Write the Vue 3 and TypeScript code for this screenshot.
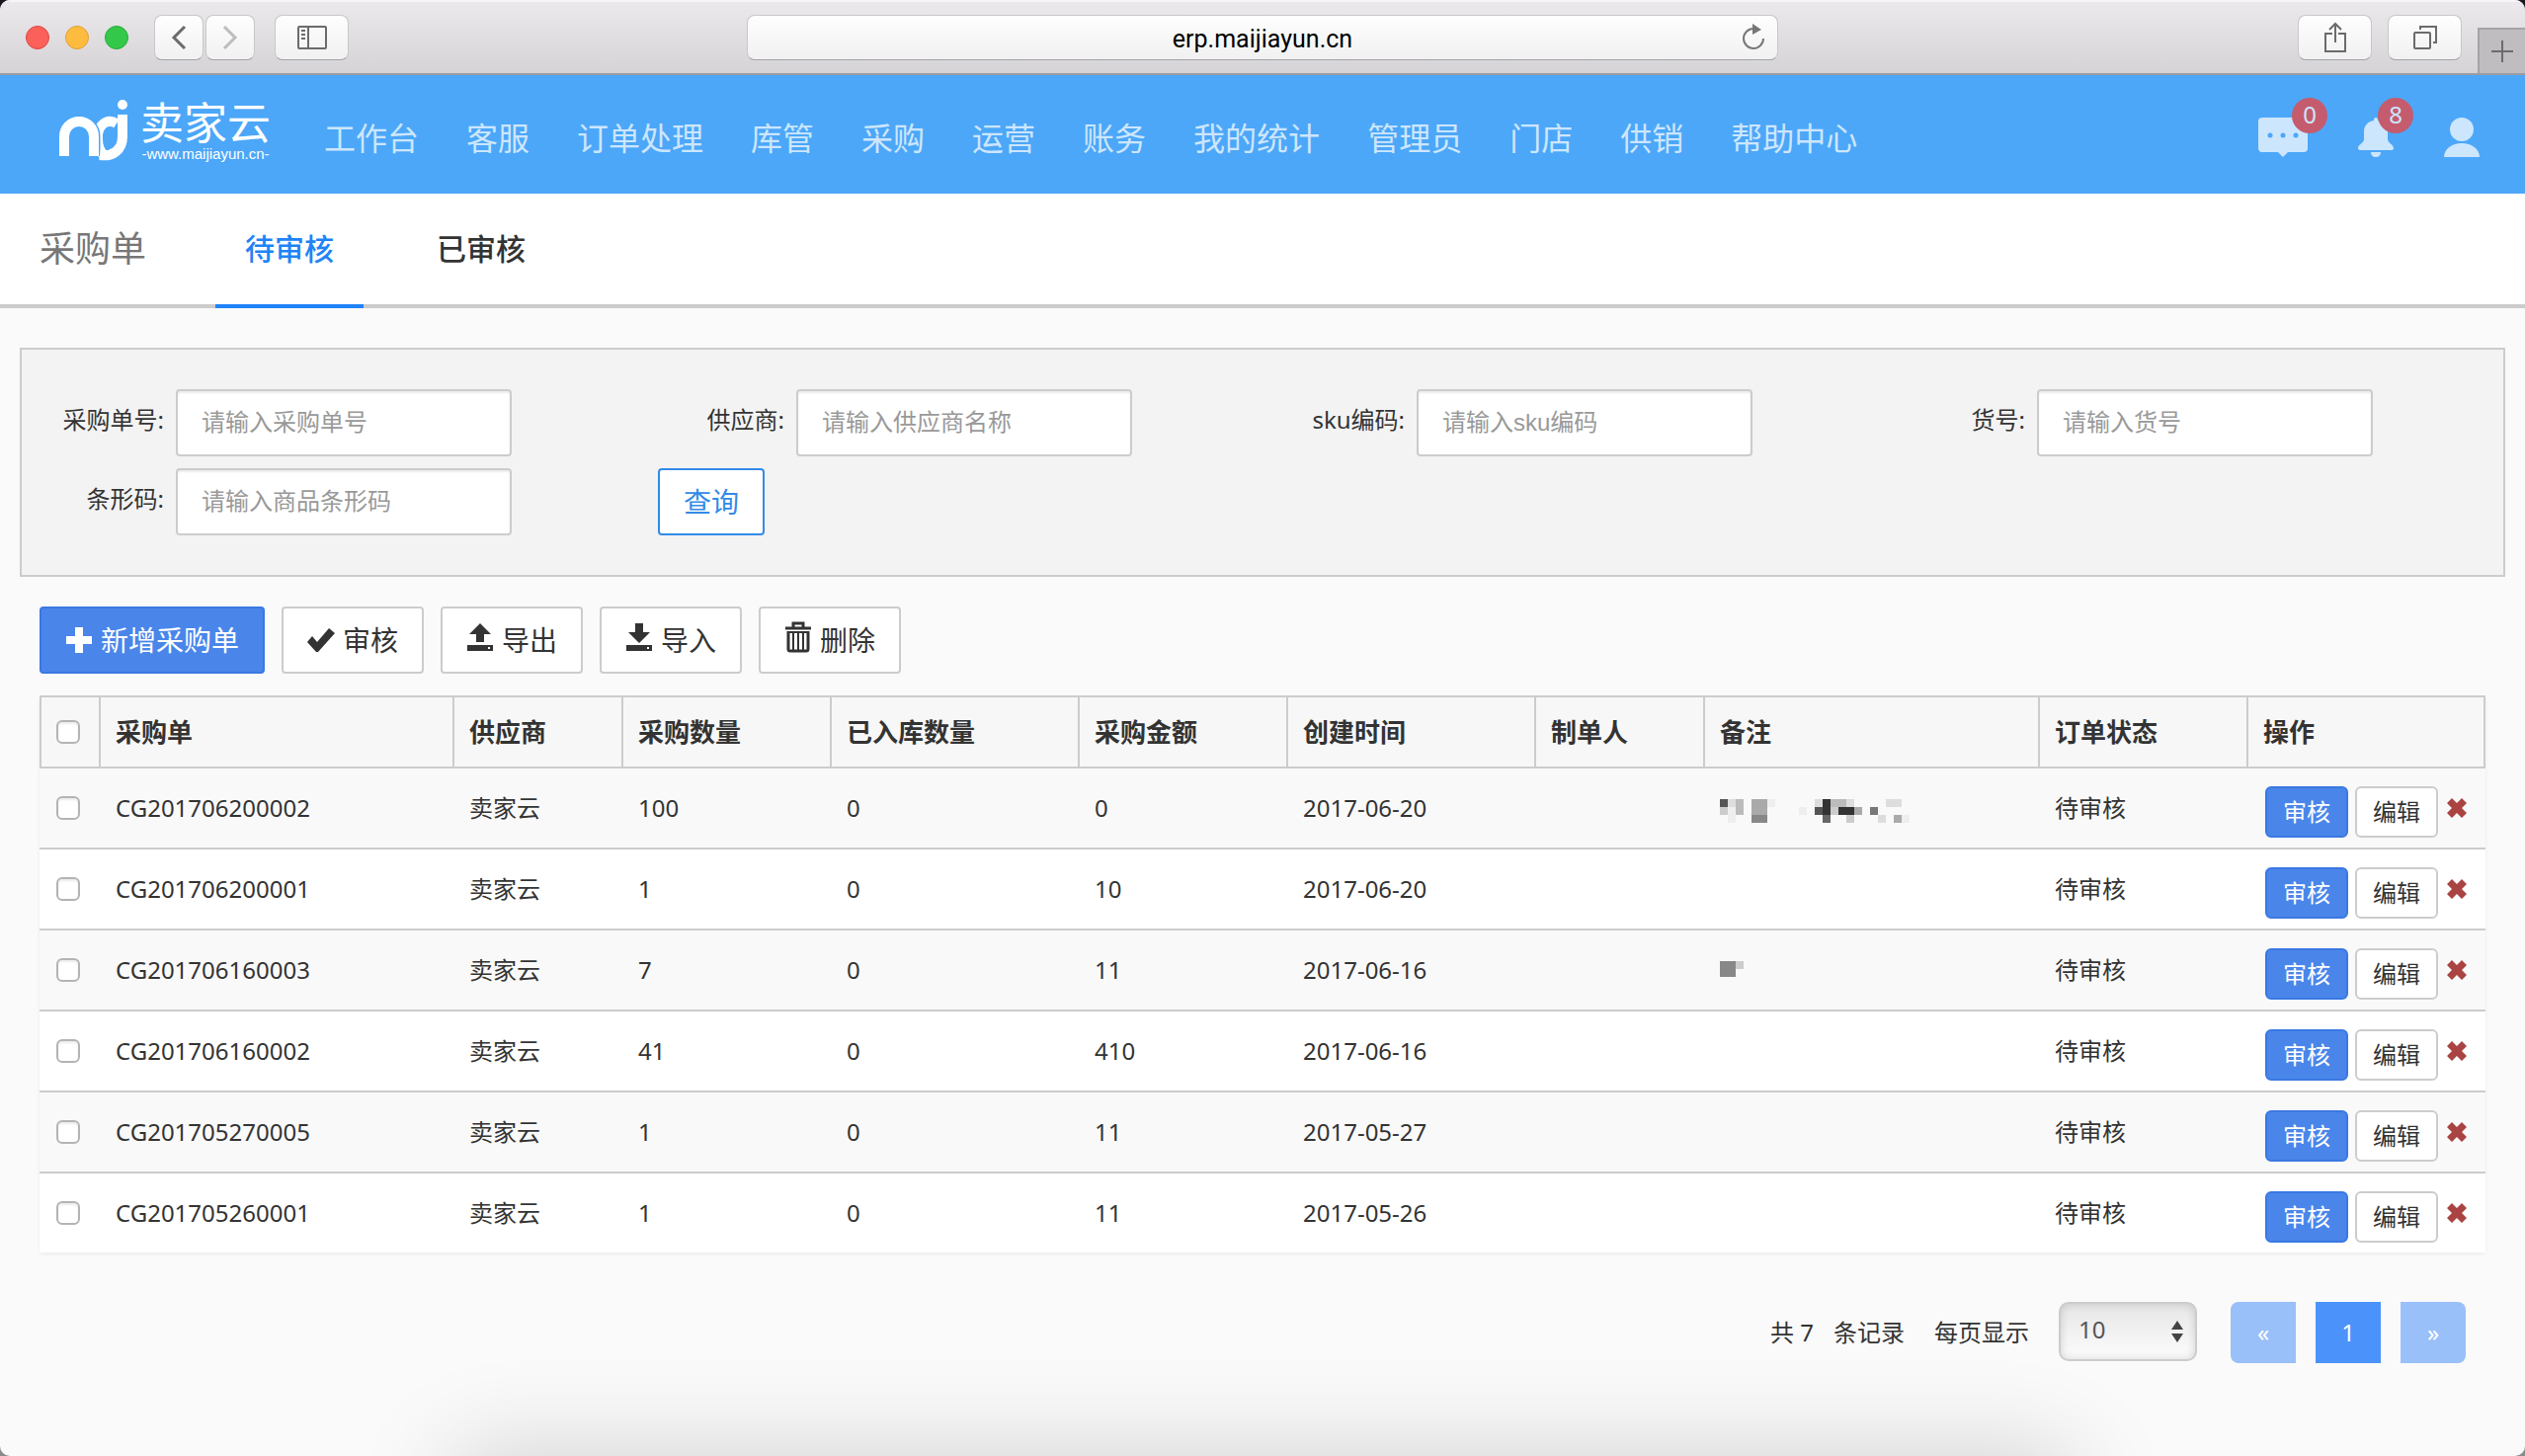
<script setup lang="ts">
import { ref } from 'vue'

interface Order {
  id: string
  supplier: string
  quantity: number
  stored: number
  amount: number
  created: string
  remark: string[]
  status: string
}

const navItems = ['工作台', '客服', '订单处理', '库管', '采购', '运营', '账务', '我的统计', '管理员', '门店', '供销', '帮助中心']

const fields = [
  { id: 'order-no', label: '采购单号:', hint: '请输入采购单号' },
  { id: 'supplier', label: '供应商:', hint: '请输入供应商名称' },
  { id: 'sku', label: 'sku编码:', hint: '请输入sku编码' },
  { id: 'item-no', label: '货号:', hint: '请输入货号' },
  { id: 'barcode', label: '条形码:', hint: '请输入商品条形码' },
]

const columns = ['采购单', '供应商', '采购数量', '已入库数量', '采购金额', '创建时间', '制单人', '备注', '订单状态', '操作']

// Redacted remarks: one hex digit of grey per 8px block, a dot is an empty block.
const longRemark = ['5db.aae.....d3bbd....dd.', 'ceb.aa....e.53c33a.7....', '.e..88.......6..c...d.ae']
const shortRemark = ['88c', '88.']

const orders: Order[] = [
  { id: 'CG201706200002', supplier: '卖家云', quantity: 100, stored: 0, amount: 0, created: '2017-06-20', remark: longRemark, status: '待审核' },
  { id: 'CG201706200001', supplier: '卖家云', quantity: 1, stored: 0, amount: 10, created: '2017-06-20', remark: [], status: '待审核' },
  { id: 'CG201706160003', supplier: '卖家云', quantity: 7, stored: 0, amount: 11, created: '2017-06-16', remark: shortRemark, status: '待审核' },
  { id: 'CG201706160002', supplier: '卖家云', quantity: 41, stored: 0, amount: 410, created: '2017-06-16', remark: [], status: '待审核' },
  { id: 'CG201705270005', supplier: '卖家云', quantity: 1, stored: 0, amount: 11, created: '2017-05-27', remark: [], status: '待审核' },
  { id: 'CG201705260001', supplier: '卖家云', quantity: 1, stored: 0, amount: 11, created: '2017-05-26', remark: [], status: '待审核' },
]

const address = ref('erp.maijiayun.cn')
const pageSize = ref('10')

function blocks(rows: string[]) {
  return rows.flatMap((row, y) =>
    [...row].map((c, x) => ({ x: x * 8, y: y * 8, fill: '#' + c.repeat(3), on: c !== '.' })).filter((b) => b.on),
  )
}
</script>

<template>
  <div class="window">
    <div class="titlebar">
      <div class="bar-left">
        <div class="lights">
          <button class="light red" aria-label="关闭"></button>
          <button class="light yellow" aria-label="最小化"></button>
          <button class="light green" aria-label="全屏"></button>
        </div>
        <div class="history">
          <button class="tool narrow" aria-label="后退">
            <svg width="16" height="26" viewBox="0 0 16 26" fill="none" stroke="#6b6b6b" stroke-width="3"><path d="M14 2 3 13l11 11" /></svg>
          </button>
          <button class="tool narrow" aria-label="前进">
            <svg width="16" height="26" viewBox="0 0 16 26" fill="none" stroke="#bdbdbd" stroke-width="3"><path d="M2 2l11 11L2 24" /></svg>
          </button>
        </div>
        <button class="tool" aria-label="边栏">
          <svg width="30" height="24" viewBox="0 0 30 24" fill="none" stroke="#6b6b6b" stroke-width="2">
            <rect x="1" y="1" width="28" height="22" rx="1" /><path d="M11 1v22M4 5h4M4 9h4M4 13h4" />
          </svg>
        </button>
      </div>
      <div class="address">
        <input v-model="address" type="text" aria-label="地址" />
        <button class="reload" aria-label="重新载入">
          <svg width="26" height="28" viewBox="0 0 26 28">
            <path d="M13 5a10 10 0 1 0 10 10" fill="none" stroke="#777" stroke-width="2" /><path d="M12 0l9 6-9 5z" fill="#777" />
          </svg>
        </button>
      </div>
      <div class="bar-right">
        <button class="tool" aria-label="共享">
          <svg width="24" height="32" viewBox="0 0 24 32" fill="none" stroke="#6b6b6b" stroke-width="2">
            <path d="M9 12H2v18h20V12h-7M12 21V2M6 8l6-6 6 6" />
          </svg>
        </button>
        <button class="tool" aria-label="标签页">
          <svg width="26" height="26" viewBox="0 0 26 26" fill="none" stroke="#6b6b6b" stroke-width="2">
            <rect x="2" y="8" width="16" height="16" rx="1" /><path d="M8 5V2h16v16h-3" />
          </svg>
        </button>
        <button class="new-tab" aria-label="新标签页">
          <svg width="22" height="22" viewBox="0 0 22 22" stroke="#6b6b6b" stroke-width="2"><path d="M11 0v22M0 11h22" /></svg>
        </button>
      </div>
    </div>

    <header class="header">
      <a class="logo" href="#">
        <svg width="70" height="62" viewBox="0 0 70 62" fill="none" stroke="#fff" stroke-width="10">
          <path d="M58 24C48 18 38 26 39 40c0 8 3 13 6 16" />
          <path d="M5 57V37a15 15 0 0 1 30 0v20" stroke="#4ca7f8" stroke-width="13" />
          <path d="M5 57V37a15 15 0 0 1 30 0v20" />
          <path d="M64 15v22c0 14-10 21-23 19" />
          <circle cx="64" cy="5" r="5" fill="#fff" stroke="none" />
        </svg>
        <span class="brand">
          <span class="brand-name">卖家云</span>
          <span class="brand-url">-www.maijiayun.cn-</span>
        </span>
      </a>
      <nav class="nav">
        <a v-for="item in navItems" :key="item" href="#">{{ item }}</a>
      </nav>
      <div class="account">
        <a class="icon-link" href="#" aria-label="消息">
          <svg width="50" height="40" viewBox="0 0 50 40" fill="#cce6fd">
            <path d="M4 0h42a4 4 0 0 1 4 4v27a4 4 0 0 1-4 4H30l-5 5-5-5H4a4 4 0 0 1-4-4V4a4 4 0 0 1 4-4z" />
            <g fill="#4ca7f8"><circle cx="12" cy="18" r="2.5" /><circle cx="25" cy="18" r="2.5" /><circle cx="38" cy="18" r="2.5" /></g>
          </svg>
          <span class="badge">0</span>
        </a>
        <a class="icon-link" href="#" aria-label="通知">
          <svg width="36" height="40" viewBox="0 0 36 40" fill="#cce6fd">
            <path d="M18 0c1.5 0 2 1 2 3 6 1 10 5 10 11v8c0 4 6 5 6 9 0 1-1 2-2 2H2c-1 0-2-1-2-2 0-4 6-5 6-9v-8C6 8 10 4 16 3c0-2 .5-3 2-3zM13 35h10c0 3-2 5-5 5s-5-2-5-5z" />
          </svg>
          <span class="badge">8</span>
        </a>
        <a class="icon-link" href="#" aria-label="账户">
          <svg width="36" height="40" viewBox="0 0 36 40" fill="#cce6fd">
            <circle cx="18" cy="12" r="12" /><path d="M0 40c0-8 8-14 18-14s18 6 18 14z" />
          </svg>
        </a>
      </div>
    </header>

    <div class="subhead">
      <h1>采购单</h1>
      <nav class="tabs">
        <a class="tab active" href="#">待审核</a>
        <a class="tab" href="#">已审核</a>
      </nav>
    </div>

    <main>
      <form class="search" @submit.prevent>
        <div v-for="field in fields" :key="field.id" class="field">
          <label :for="field.id">{{ field.label }}</label>
          <input :id="field.id" type="text" :placeholder="field.hint" />
        </div>
        <div class="field action"><button class="query" type="submit">查询</button></div>
      </form>

      <div class="toolbar">
        <button class="btn primary">
          <svg width="28" height="28" viewBox="0 0 28 28"><path d="M10 1h8v9h9v8h-9v9h-8v-9H1v-8h9z" fill="#fff" /></svg>新增采购单
        </button>
        <button class="btn">
          <svg width="28" height="28" viewBox="0 0 28 28"><path d="M0 16l5-6 5 6L22 2l6 5-17 19H9z" fill="#333" /></svg>审核
        </button>
        <button class="btn">
          <svg class="raised" width="28" height="30" viewBox="0 0 28 30" fill="#333">
            <path d="M14 1l11 11h-7v8h-8v-8H3z" /><path fill-rule="evenodd" d="M1 23h26v6H1zm21 2v2h2v-2z" />
          </svg>导出
        </button>
        <button class="btn">
          <svg class="raised" width="28" height="30" viewBox="0 0 28 30" fill="#333">
            <path d="M10 1h8v9h7L14 21 3 10h7z" /><path fill-rule="evenodd" d="M1 23h26v6H1zm21 2v2h2v-2z" />
          </svg>导入
        </button>
        <button class="btn">
          <svg class="raised" width="28" height="32" viewBox="0 0 28 32" fill="none" stroke="#333" stroke-width="3">
            <path d="M1 7h26M9 6V2h10v4M4 10v18a2 2 0 0 0 2 2h16a2 2 0 0 0 2-2V10" />
            <path d="M4 11h20M9 11v19M14 11v19M19 11v19" stroke-width="2" />
          </svg>删除
        </button>
      </div>

      <table class="orders">
        <colgroup>
          <col class="w-check" /><col class="w-id" /><col class="w-short" /><col class="w-mid" /><col class="w-long" /><col class="w-mid" />
          <col class="w-long" /><col class="w-short" /><col /><col class="w-mid" /><col class="w-ops" />
        </colgroup>
        <thead>
          <tr>
            <th class="check"><input type="checkbox" aria-label="全选" /></th>
            <th v-for="column in columns" :key="column">{{ column }}</th>
          </tr>
        </thead>
        <tbody>
          <tr v-for="order in orders" :key="order.id">
            <td class="check"><input type="checkbox" :aria-label="order.id" /></td>
            <td>{{ order.id }}</td>
            <td>{{ order.supplier }}</td>
            <td>{{ order.quantity }}</td>
            <td>{{ order.stored }}</td>
            <td>{{ order.amount }}</td>
            <td>{{ order.created }}</td>
            <td></td>
            <td>
              <svg v-if="order.remark.length" class="mosaic" width="192" height="24" shape-rendering="crispEdges">
                <rect v-for="b in blocks(order.remark)" :key="b.x + '-' + b.y" :x="b.x" :y="b.y" width="8" height="8" :fill="b.fill" />
              </svg>
            </td>
            <td>{{ order.status }}</td>
            <td class="ops">
              <div class="ops-row">
                <button class="small primary">审核</button>
                <button class="small">编辑</button>
                <button class="remove" aria-label="删除">
                  <svg width="20" height="20" viewBox="0 0 20 20"><path d="M5 0l5 5 5-5 5 5-5 5 5 5-5 5-5-5-5 5-5-5 5-5-5-5z" fill="#a94442" /></svg>
                </button>
              </div>
            </td>
          </tr>
        </tbody>
      </table>

      <div class="paging">
        <span>共 7</span>
        <span class="records">条记录</span>
        <label for="page-size">每页显示</label>
        <div class="select">
          <select id="page-size" v-model="pageSize">
            <option>10</option>
            <option>20</option>
            <option>50</option>
          </select>
          <svg width="12" height="22" viewBox="0 0 12 22" fill="#444"><path d="M6 0l6 9H0zM0 13h12l-6 9z" /></svg>
        </div>
        <button class="page first" disabled>«</button>
        <button class="page current">1</button>
        <button class="page last" disabled>»</button>
      </div>
    </main>
    <div class="dock-shadow"></div>
  </div>
</template>

<style>
html {
  background: linear-gradient(#1c1620, #8a8a8a);
}
</style>

<style scoped>
.window {
  position: relative;
  display: flex;
  flex-direction: column;
  min-height: 100vh;
  overflow: hidden;
  border-radius: 10px;
  background: #fafafa;
  color: #333;
  font: 24px/32px "Noto Sans", "Noto Sans CJK SC", sans-serif;
}
.window *,
.window *::before {
  box-sizing: border-box;
}
button,
input,
select {
  margin: 0;
  padding: 0;
  font: inherit;
  color: inherit;
}
a {
  color: inherit;
  text-decoration: none;
}
svg {
  display: block;
  flex: none;
}

.titlebar {
  display: grid;
  grid-template-columns: 1fr minmax(400px, 1044px) 1fr;
  height: 76px;
  border-top: 2px solid #f6f4f7;
  border-bottom: 2px solid #9e9ca0;
  background: linear-gradient(#ebe9ec, #d5d3d6);
}
.bar-left,
.bar-right {
  display: flex;
  align-items: center;
}
.lights {
  display: flex;
  gap: 16px;
  margin: 0 26px;
}
.light {
  width: 24px;
  height: 24px;
  border: 1px solid #e0443e;
  border-radius: 50%;
  background: #fc605b;
}
.yellow {
  border-color: #dea034;
  background: #fdbc40;
}
.green {
  border-color: #27aa35;
  background: #34c84a;
}
.history {
  display: flex;
  gap: 2px;
  margin-right: 20px;
}
.tool {
  display: flex;
  align-items: center;
  justify-content: center;
  width: 75px;
  height: 46px;
  border: 1px solid #c8c7c9;
  border-bottom-color: #a2a1a3;
  border-radius: 8px;
  background: linear-gradient(#fefefe, #f1f1f1);
}
.narrow {
  width: 50px;
}
.address {
  position: relative;
  display: flex;
  align-items: center;
}
.address input {
  width: 100%;
  height: 46px;
  padding-top: 2px;
  border: 1px solid #c8c7c9;
  border-bottom-color: #a2a1a3;
  border-radius: 8px;
  background: linear-gradient(#fefefe, #f1f1f1);
  color: #000;
  font-family: Roboto, sans-serif;
  font-size: 25px;
  text-align: center;
}
.reload {
  position: absolute;
  right: 12px;
  border: 0;
  background: none;
}
.bar-right {
  justify-content: flex-end;
  gap: 16px;
}
.new-tab {
  display: flex;
  align-items: center;
  justify-content: center;
  align-self: flex-end;
  width: 48px;
  height: 46px;
  border: solid #a5a3a6;
  border-width: 2px 0 0 2px;
  background: #bfbdc0;
}

.header {
  display: flex;
  align-items: center;
  height: 120px;
  padding: 0 46px 0 60px;
  background: #4ca7f8;
  color: #cce6fd;
}
.logo {
  display: flex;
  align-items: center;
  gap: 12px;
  width: 268px;
  padding-bottom: 8px;
  color: #fff;
}
.brand {
  display: flex;
  flex-direction: column;
  align-items: center;
}
.brand-name {
  font-family: "Noto Sans CJK SC", sans-serif;
  font-size: 44px;
  line-height: 48px;
}
.brand-url {
  font-family: "Liberation Sans", sans-serif;
  font-size: 15px;
  line-height: 20px;
}
.nav {
  display: flex;
  flex: 1;
  gap: 48px;
  padding-top: 8px;
  font-size: 32px;
  line-height: 40px;
  white-space: nowrap;
}
.account {
  display: flex;
  gap: 51px;
  padding-top: 6px;
}
.icon-link {
  position: relative;
}
.badge {
  position: absolute;
  top: -20px;
  right: -20px;
  width: 36px;
  height: 36px;
  border-radius: 50%;
  background: #c45c6e;
  font-size: 24px;
  line-height: 34px;
  text-align: center;
}

.subhead {
  display: flex;
  gap: 70px;
  height: 116px;
  padding-left: 40px;
  border-bottom: 4px solid #ccc;
  background: #fff;
  line-height: 112px;
}
h1 {
  margin: 0;
  color: #777;
  font-size: 36px;
  font-weight: 400;
}
.tabs {
  display: flex;
  gap: 44px;
  font-size: 30px;
  font-weight: 500;
}
.tab {
  height: 116px;
  padding: 0 30px;
}
.active {
  border-bottom: 4px solid #2083f7;
  color: #2083f7;
}

.search {
  display: grid;
  grid-template-columns: repeat(4, 1fr);
  row-gap: 12px;
  margin: 40px 20px 30px;
  padding: 40px 0;
  border: 2px solid #ccc;
  background: #f3f3f3;
}
.field {
  display: flex;
  gap: 12px;
}
.field label {
  width: 144px;
  line-height: 62px;
  text-align: right;
}
.field input {
  width: 340px;
  height: 68px;
  padding: 0 24px;
  border: 2px solid #ccc;
  border-radius: 4px;
  background: #fff;
  box-shadow: inset 0 2px 2px rgba(0, 0, 0, 0.08);
  font-family: "Liberation Sans", "Noto Sans CJK SC", sans-serif;
}
.field input::placeholder {
  color: #999;
}
.action {
  padding-left: 16px;
}
.query {
  width: 108px;
  height: 68px;
  border: 2px solid #338ae8;
  border-radius: 4px;
  background: #fff;
  color: #338ae8;
  font-size: 28px;
}

.toolbar {
  display: flex;
  gap: 17px;
  margin: 0 40px 22px;
}
.btn {
  display: flex;
  align-items: center;
  gap: 8px;
  height: 68px;
  padding: 0 24px;
  border: 2px solid #ccc;
  border-radius: 4px;
  background: #fff;
  font-size: 28px;
  white-space: nowrap;
}
.raised {
  margin-bottom: 6px;
}
.btn.primary,
.small.primary {
  border-color: #3a78e2;
  background: #4a86ea;
  color: #fff;
}

.orders {
  margin: 0 40px;
  width: calc(100% - 80px);
  border-spacing: 0;
  border-radius: 4px;
  background: #fff;
  box-shadow: 0 2px 4px rgba(0, 0, 0, 0.06);
  table-layout: fixed;
}
.w-check { width: 60px; }
.w-id { width: 358px; }
.w-short { width: 171px; }
.w-mid { width: 211px; }
.w-long { width: 251px; }
.w-ops { width: 242px; }
th {
  height: 74px;
  padding: 0 15px;
  border: solid #ccc;
  border-width: 2px 0 2px 2px;
  background: #f7f7f7;
  font-size: 26px;
  font-weight: 600;
  text-align: left;
}
th:last-child {
  border-right-width: 2px;
}
td {
  height: 82px;
  padding: 0 17px;
  border-bottom: 2px solid #ccc;
}
tbody tr:nth-child(odd) td {
  background: #f9f9f9;
}
tbody tr:nth-child(even) td {
  background: #fff;
}
tbody tr:last-child td {
  height: 80px;
  border-bottom: 0;
}
.check input {
  display: block;
  width: 24px;
  height: 24px;
  border: 2px solid #b4b4b4;
  border-radius: 6px;
  background: #fff;
  box-shadow: inset 0 2px 2px rgba(0, 0, 0, 0.08);
  appearance: none;
}
.mosaic {
  margin-top: 6px;
}
td.ops {
  padding: 18px 0 0 19px;
  vertical-align: top;
}
.ops-row {
  display: flex;
  gap: 7px;
}
.small {
  width: 84px;
  height: 52px;
  border: 2px solid #ccc;
  border-radius: 6px;
  background: #fff;
}
.remove {
  align-self: flex-start;
  padding: 12px 0 0 2px;
  border: 0;
  background: none;
}

.paging {
  display: flex;
  justify-content: flex-end;
  margin: 50px 60px 0;
  line-height: 62px;
}
.records {
  margin: 0 30px 0 20px;
}
.select {
  position: relative;
  margin: 0 34px 0 30px;
}
.select select {
  display: block;
  width: 140px;
  height: 60px;
  padding: 0 20px 4px 18px;
  border: 2px solid #ccc;
  border-radius: 10px;
  background: linear-gradient(#e6e6e6, #fcfcfc);
  box-shadow: inset 0 0 8px rgba(0, 0, 0, 0.16);
  color: #555;
  line-height: 32px;
  appearance: none;
}
.select svg {
  position: absolute;
  top: 19px;
  right: 14px;
  pointer-events: none;
}
.page {
  width: 66px;
  height: 62px;
  border: 0;
  background: #99c0f8;
  color: #fff;
}
.current {
  margin: 0 20px;
  background: #4b93fa;
}
.first {
  border-radius: 8px 0 0 8px;
}
.last {
  border-radius: 0 8px 8px 0;
}
.dock-shadow {
  position: absolute;
  top: 100%;
  left: 18%;
  right: 18%;
  height: 100px;
  box-shadow: 0 0 100px rgba(0, 0, 0, 0.18);
}
</style>
